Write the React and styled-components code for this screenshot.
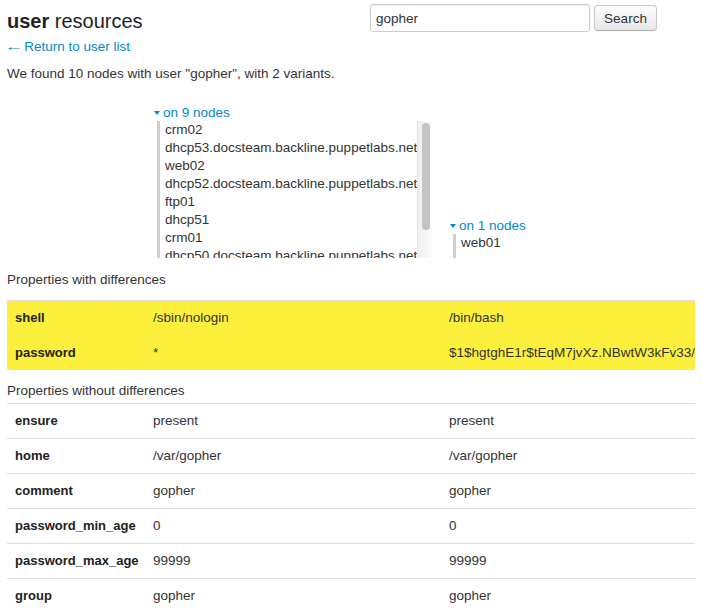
import styled, { createGlobalStyle } from 'styled-components';

const GlobalStyle = createGlobalStyle`
  body {
    margin: 0;
    background: #fff;
    color: #333;
    font-family: "Liberation Sans", Arial, Helvetica, sans-serif;
    font-size: 13.5px;
    line-height: 18px;
  }
`;

const nineNodes = [
  'crm02',
  'dhcp53.docsteam.backline.puppetlabs.net',
  'web02',
  'dhcp52.docsteam.backline.puppetlabs.net',
  'ftp01',
  'dhcp51',
  'crm01',
  'dhcp50.docsteam.backline.puppetlabs.net',
  'ftp02',
];

const differing = [
  ['shell', '/sbin/nologin', '/bin/bash'],
  ['password', '*', '$1$hgtghE1r$tEqM7jvXz.NBwtW3kFv33/'],
];

const same = [
  ['ensure', 'present', 'present'],
  ['home', '/var/gopher', '/var/gopher'],
  ['comment', 'gopher', 'gopher'],
  ['password_min_age', '0', '0'],
  ['password_max_age', '99999', '99999'],
  ['group', 'gopher', 'gopher'],
];

export default function App() {
  return (
    <>
      <GlobalStyle />
      <Page>
        <Header>
          <Title>
            <strong>user</strong> resources
          </Title>
          <SearchForm>
            <SearchInput defaultValue="gopher" />
            <SearchButton type="button">Search</SearchButton>
          </SearchForm>
        </Header>

        <BackLink href="#">
          <Arrow>←</Arrow> Return to user list
        </BackLink>
        <Summary>We found 10 nodes with user "gopher", with 2 variants.</Summary>

        <Variants>
          <span />
          <NodeGroup>
            <GroupToggle>
              <Caret />
              on 9 nodes
            </GroupToggle>
            <ScrollBox>
              <NodeList>
                {nineNodes.map((n) => (
                  <li key={n}>{n}</li>
                ))}
              </NodeList>
              <ScrollTrack>
                <ScrollThumb />
              </ScrollTrack>
            </ScrollBox>
          </NodeGroup>
          <NodeGroup>
            <GroupToggle>
              <Caret />
              on 1 nodes
            </GroupToggle>
            <ShortList>
              <li>web01</li>
            </ShortList>
          </NodeGroup>
        </Variants>

        <SectionTitle top={13} bottom={11}>Properties with differences</SectionTitle>
        <PropTable>
          <tbody>
            {differing.map(([k, a, b]) => (
              <Row key={k} highlight>
                <th>{k}</th>
                <td>{a}</td>
                <td>{b}</td>
              </Row>
            ))}
          </tbody>
        </PropTable>

        <SectionTitle top={12} bottom={3}>Properties without differences</SectionTitle>
        <PropTable>
          <tbody>
            {same.map(([k, a, b]) => (
              <Row key={k}>
                <th>{k}</th>
                <td>{a}</td>
                <td>{b}</td>
              </Row>
            ))}
          </tbody>
        </PropTable>
      </Page>
    </>
  );
}

const Page = styled.div`
  padding: 0 8px 0 7px;
`;

const Header = styled.div`
  display: flex;
  align-items: flex-start;
  height: 38px;
`;

const Title = styled.h1`
  width: 363px;
  margin: 9px 0 0;
  font-size: 20px;
  line-height: 24px;
  font-weight: normal;
  color: #222;

  strong {
    font-weight: bold;
  }
`;

const SearchForm = styled.form`
  display: flex;
  align-items: center;
  gap: 4px;
  margin-top: 4px;
`;

const SearchInput = styled.input`
  box-sizing: border-box;
  width: 220px;
  height: 28px;
  padding: 4px 5px;
  border: 1px solid #ccc;
  border-radius: 3px;
  box-shadow: inset 0 1px 1px rgba(0, 0, 0, 0.06);
  font-family: inherit;
  font-size: 13.5px;
  color: #333;
  outline: none;
`;

const SearchButton = styled.button`
  box-sizing: border-box;
  height: 26px;
  width: 63px;
  padding: 0 8px;
  border: 1px solid #c8c8c8;
  border-bottom-color: #b3b3b3;
  border-radius: 4px;
  background: linear-gradient(#ffffff, #e6e6e6);
  box-shadow: 0 1px 2px rgba(0, 0, 0, 0.05);
  font-family: inherit;
  font-size: 13.5px;
  color: #333;
  cursor: pointer;
`;

const BackLink = styled.a`
  display: block;
  color: #0088cc;
  text-decoration: none;
`;

const Arrow = styled.span`
  display: inline-block;
  transform: scaleX(1.4);
  transform-origin: center;
`;

const Summary = styled.p`
  margin: 9px 0 0;
`;

const Variants = styled.div`
  display: grid;
  grid-template-columns: 138px 296px 1fr;
  align-items: end;
  margin-top: 21px;
`;

const NodeGroup = styled.div`
  padding: 0 8px;
`;

const GroupToggle = styled.div`
  display: flex;
  align-items: center;
  color: #0088cc;
  line-height: 17px;
`;

const Caret = styled.span`
  width: 0;
  height: 0;
  margin: 1px 3px 0 1px;
  border-left: 3.5px solid transparent;
  border-right: 3.5px solid transparent;
  border-top: 4px solid #0088cc;
`;

const ScrollBox = styled.div`
  display: flex;
  box-sizing: border-box;
  width: 275px;
  height: 137px;
  margin-left: 4px;
  border-left: 3px solid #cfcfcf;
  overflow: hidden;
`;

const NodeList = styled.ul`
  flex: 1;
  list-style: none;
  margin: 0;
  padding: 0 0 0 5px;
  overflow: hidden;
  white-space: nowrap;

  li {
    line-height: 18px;
  }
`;

const ScrollTrack = styled.div`
  flex: 0 0 15px;
  box-sizing: border-box;
  padding: 2px 2px 0 4px;
  background: linear-gradient(to right, #efefef, #fbfbfb);
  border-left: 1px solid #e4e4e4;
`;

const ScrollThumb = styled.div`
  height: 107px;
  border-radius: 4px;
  background: #c3c3c3;
`;

const ShortList = styled.ul`
  list-style: none;
  margin: 0 0 0 4px;
  padding: 0 0 6px 5px;
  border-left: 3px solid #cfcfcf;
  white-space: nowrap;

  li {
    line-height: 18px;
  }
`;

const SectionTitle = styled.h4`
  margin: ${(p) => p.top}px 0 ${(p) => p.bottom}px;
  font-size: 13.5px;
  font-weight: normal;
  line-height: 18px;
  color: #333;
`;

const PropTable = styled.table`
  width: 688px;
  border-collapse: collapse;
  table-layout: fixed;

  th,
  td {
    padding: 8px;
    border-top: 1px solid #ddd;
    text-align: left;
    vertical-align: top;
    line-height: 18px;
    white-space: nowrap;
  }

  th {
    width: 122px;
    font-size: 13px;
    font-weight: bold;
    color: #222;
  }

  td:nth-child(2) {
    width: 280px;
  }
`;

const Row = styled.tr`
  background: ${(p) => (p.highlight ? '#fcf03c' : 'transparent')};
`;
